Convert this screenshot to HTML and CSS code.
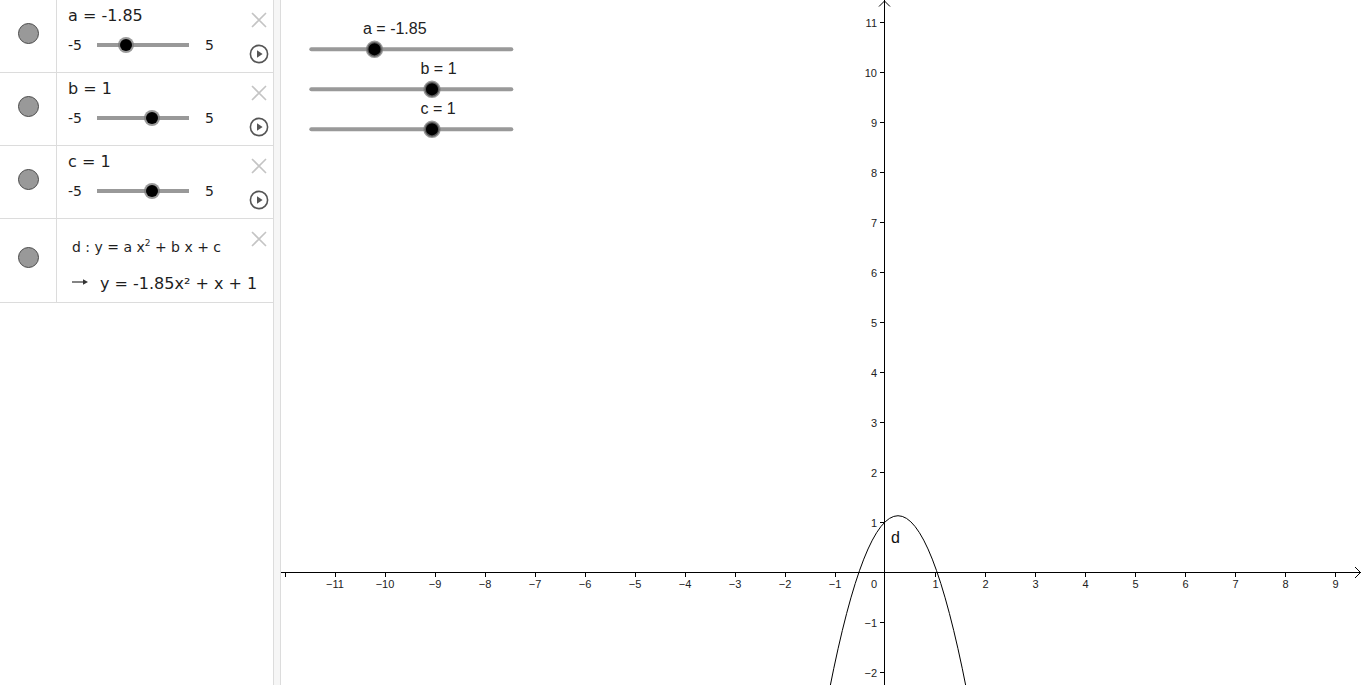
FILE: index.html
```html
<!DOCTYPE html>
<html>
<head>
<meta charset="utf-8">
<title>GeoGebra</title>
<link rel="stylesheet" href="styles.css">
</head>
<body>
<div class="app">
  <div class="algebra">
    <div class="item">
      <div class="marble-cell"><span class="marble"></span></div>
      <div class="content">
        <div class="title">a = -1.85</div>
        <div class="slider-row"><span class="min">-5</span><div class="track"><span class="knob" style="left:31.5%"></span></div><span class="max">5</span></div>
      </div>
      <div class="controls">
        <svg class="close" width="16" height="16" viewBox="0 0 16 16"><path d="M1 1L15 15M15 1L1 15"/></svg>
        <svg class="play" width="20" height="20" viewBox="0 0 20 20"><circle cx="10" cy="10" r="8.6"/><path d="M8 6.3L13.6 10L8 13.7Z"/></svg>
      </div>
    </div>
    <div class="item">
      <div class="marble-cell"><span class="marble"></span></div>
      <div class="content">
        <div class="title">b = 1</div>
        <div class="slider-row"><span class="min">-5</span><div class="track"><span class="knob" style="left:60%"></span></div><span class="max">5</span></div>
      </div>
      <div class="controls">
        <svg class="close" width="16" height="16" viewBox="0 0 16 16"><path d="M1 1L15 15M15 1L1 15"/></svg>
        <svg class="play" width="20" height="20" viewBox="0 0 20 20"><circle cx="10" cy="10" r="8.6"/><path d="M8 6.3L13.6 10L8 13.7Z"/></svg>
      </div>
    </div>
    <div class="item">
      <div class="marble-cell"><span class="marble"></span></div>
      <div class="content">
        <div class="title">c = 1</div>
        <div class="slider-row"><span class="min">-5</span><div class="track"><span class="knob" style="left:60%"></span></div><span class="max">5</span></div>
      </div>
      <div class="controls">
        <svg class="close" width="16" height="16" viewBox="0 0 16 16"><path d="M1 1L15 15M15 1L1 15"/></svg>
        <svg class="play" width="20" height="20" viewBox="0 0 20 20"><circle cx="10" cy="10" r="8.6"/><path d="M8 6.3L13.6 10L8 13.7Z"/></svg>
      </div>
    </div>
    <div class="item item-func">
      <div class="marble-cell"><span class="marble"></span></div>
      <div class="content func">
        <div class="def">d : y = a x<sup>2</sup> + b x + c</div>
        <div class="val"><svg class="arrow" width="16" height="8" viewBox="0 0 16 8"><path d="M0 4H12"/><polygon points="11,1.3 16,4 11,6.7"/></svg>y = -1.85x² + x + 1</div>
      </div>
      <div class="controls">
        <svg class="close" width="16" height="16" viewBox="0 0 16 16"><path d="M1 1L15 15M15 1L1 15"/></svg>
      </div>
    </div>
  </div>
  <div class="divider"></div>
  <svg class="graphics" width="1082" height="685" viewBox="281 0 1082 685">
    <g class="gslider">
      <line x1="311.3" y1="49.3" x2="511.3" y2="49.3"/>
      <line x1="311.3" y1="89.3" x2="511.3" y2="89.3"/>
      <line x1="311.3" y1="129.3" x2="511.3" y2="129.3"/>
    </g>
    <g class="gknob">
      <circle cx="374.5" cy="49.3" r="7.4"/>
      <circle cx="432" cy="89.3" r="7.4"/>
      <circle cx="432" cy="129.3" r="7.4"/>
    </g>
    <g class="glabel">
      <text x="363" y="34">a = -1.85</text>
      <text x="420.5" y="74">b = 1</text>
      <text x="420.5" y="114">c = 1</text>
    </g>
    <g class="axes">
      <path d="M281 572.5H1361M884.5 0V685"/>
      <path d="M1355 567L1360.5 572.5L1355 578M879 6.5L884.5 1L890 6.5"/>
      <path d="M285.5 572V577M335.5 572V577M385.5 572V577M435.5 572V577M485.5 572V577M535.5 572V577M585.5 572V577M635.5 572V577M685.5 572V577M735.5 572V577M785.5 572V577M835.5 572V577M935.5 572V577M985.5 572V577M1035.5 572V577M1085.5 572V577M1135.5 572V577M1185.5 572V577M1235.5 572V577M1285.5 572V577M1335.5 572V577"/>
      <path d="M880 22.5H885M880 72.5H885M880 122.5H885M880 172.5H885M880 222.5H885M880 272.5H885M880 322.5H885M880 372.5H885M880 422.5H885M880 472.5H885M880 522.5H885M880 622.5H885M880 672.5H885"/>
    </g>
    <g class="xlabels">
      <text x="335" y="588">−11</text>
      <text x="385" y="588">−10</text>
      <text x="435" y="588">−9</text>
      <text x="485" y="588">−8</text>
      <text x="535" y="588">−7</text>
      <text x="585" y="588">−6</text>
      <text x="635" y="588">−5</text>
      <text x="685" y="588">−4</text>
      <text x="735" y="588">−3</text>
      <text x="785" y="588">−2</text>
      <text x="835" y="588">−1</text>
      <text x="935.5" y="588">1</text>
      <text x="985.5" y="588">2</text>
      <text x="1035.5" y="588">3</text>
      <text x="1085.5" y="588">4</text>
      <text x="1135.5" y="588">5</text>
      <text x="1185.5" y="588">6</text>
      <text x="1235.5" y="588">7</text>
      <text x="1285.5" y="588">8</text>
      <text x="1335.5" y="588">9</text>
    </g>
    <g class="ylabels">
      <text x="877" y="588">0</text>
      <text x="877" y="26.5">11</text>
      <text x="877" y="76.5">10</text>
      <text x="877" y="126.5">9</text>
      <text x="877" y="176.5">8</text>
      <text x="877" y="226.5">7</text>
      <text x="877" y="276.5">6</text>
      <text x="877" y="326.5">5</text>
      <text x="877" y="376.5">4</text>
      <text x="877" y="426.5">3</text>
      <text x="877" y="476.5">2</text>
      <text x="877" y="526.5">1</text>
      <text x="877" y="626.5">−1</text>
      <text x="877" y="676.5">−2</text>
    </g>
    <path class="curve" d="M829.5 689.4Q898 342.1 966.5 689.3"/>
    <text class="curve-label" x="891" y="543">d</text>
  </svg>
</div>
</body>
</html>
```

FILE: styles.css
```css
html, body {
  margin: 0;
  padding: 0;
  background: #fff;
  overflow: hidden;
}

.app {
  display: flex;
  width: 1363px;
  height: 685px;
}

.algebra {
  width: 273px;
  flex: none;
  font-family: "DejaVu Sans", sans-serif;
  color: #1e1e1e;
}

.item {
  display: flex;
  height: 72px;
  border-bottom: 1px solid #dcdcdc;
}

.item-func {
  height: 83px;
}

.marble-cell {
  width: 56px;
  flex: none;
  border-right: 1px solid #dcdcdc;
  display: flex;
  align-items: center;
  justify-content: center;
  padding-bottom: 6px;
  box-sizing: content-box;
}

.marble {
  width: 19px;
  height: 19px;
  border-radius: 50%;
  background: #999;
  border: 1px solid #4a4a4a;
}

.content {
  flex: 1;
  min-width: 0;
  padding: 6px 0 0 11px;
}

.title {
  font-size: 16px;
  line-height: 19px;
}

.slider-row {
  display: flex;
  align-items: center;
  height: 20px;
  margin-top: 10px;
  font-size: 14px;
}

.min {
  width: 29px;
}

.track {
  position: relative;
  width: 92px;
  height: 4px;
  background: #999;
}

.knob {
  position: absolute;
  top: 50%;
  width: 12px;
  height: 12px;
  border-radius: 50%;
  background: #000;
  box-shadow: 0 0 0 2px rgba(120, 120, 120, 0.75);
  transform: translate(-50%, -50%);
}

.max {
  margin-left: 16px;
}

.controls {
  width: 24px;
  margin-right: 2px;
  flex: none;
  display: flex;
  flex-direction: column;
  align-items: center;
}

.close {
  margin-top: 12px;
  fill: none;
  stroke: #c4c4c4;
  stroke-width: 1.6;
}

.play {
  margin-top: 16px;
  margin-left: -1px;
}

.play circle {
  fill: none;
  stroke: #555;
  stroke-width: 1.6;
}

.play path {
  fill: #555;
}

.func {
  padding: 20px 0 0 15px;
  white-space: nowrap;
}

.def {
  font-size: 14px;
  line-height: 17px;
}

.def sup {
  font-size: 9px;
  line-height: 0;
  vertical-align: 6px;
}

.val {
  margin-top: 18px;
  font-size: 16px;
  line-height: 19px;
}

.arrow {
  display: inline-block;
  vertical-align: 3px;
  margin-right: 12px;
}

.arrow path {
  stroke: #333;
  stroke-width: 1.2;
  fill: none;
}

.arrow polygon {
  fill: #333;
}

.divider {
  width: 6px;
  flex: none;
  background: #f6f6f6;
  border-left: 1px solid #dcdcdc;
  border-right: 1px solid #dcdcdc;
}

.graphics {
  display: block;
  flex: none;
  background: #fff;
}

.gslider line {
  stroke: #999;
  stroke-width: 4;
  stroke-linecap: round;
}

.gknob circle {
  fill: #000;
  stroke: rgba(120, 120, 120, 0.75);
  stroke-width: 2.6;
}

.glabel text {
  font-family: "Liberation Sans", Arial, sans-serif;
  font-size: 16px;
  fill: #222;
}

.axes path {
  fill: none;
  stroke: #000;
  stroke-width: 1;
}

.xlabels text,
.ylabels text {
  font-family: "Liberation Sans", Arial, sans-serif;
  font-size: 11px;
  fill: #222;
}

.xlabels text {
  text-anchor: middle;
}

.ylabels text {
  text-anchor: end;
}

.curve {
  fill: none;
  stroke: #000;
  stroke-width: 1;
}

.curve-label {
  font-family: "Liberation Sans", Arial, sans-serif;
  font-size: 16px;
  fill: #111;
}
```
